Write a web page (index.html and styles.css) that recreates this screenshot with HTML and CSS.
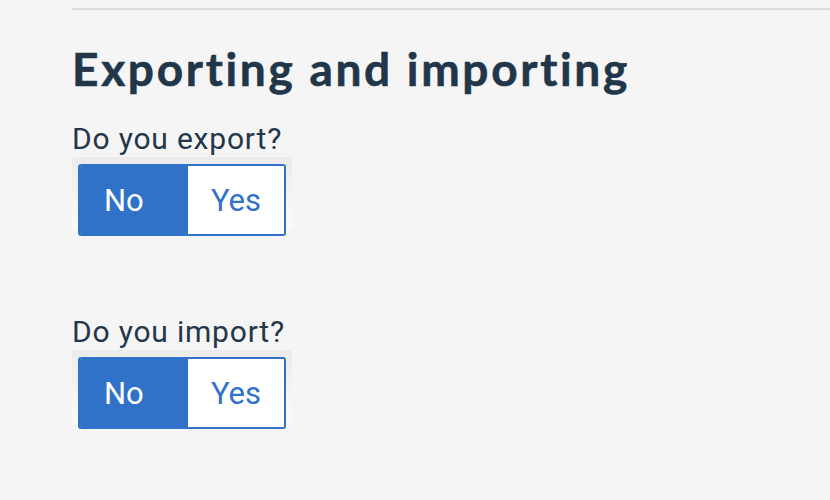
FILE: index.html
```html
<!DOCTYPE html>
<html lang="en">
<head>
<meta charset="utf-8">
<title>Exporting and importing</title>
<link rel="stylesheet" href="styles.css">
</head>
<body>
<main class="page">
  <hr class="rule">
  <h2 class="title">Exporting and importing</h2>
  <div class="question">
    <p class="label">Do you export?</p>
    <div class="toggle-wrap">
      <div class="toggle">
        <button class="opt opt-on">No</button>
        <button class="opt opt-off">Yes</button>
      </div>
    </div>
  </div>
  <div class="question">
    <p class="label">Do you import?</p>
    <div class="toggle-wrap">
      <div class="toggle">
        <button class="opt opt-on">No</button>
        <button class="opt opt-off">Yes</button>
      </div>
    </div>
  </div>
</main>
</body>
</html>
```

FILE: styles.css
```css
html, body {
  margin: 0;
  padding: 0;
  background: #f5f5f5;
  min-height: 100vh;
}
.page {
  padding-left: 72px;
  padding-top: 8px;
  display: flex;
  flex-direction: column;
  align-items: flex-start;
}
.rule {
  align-self: stretch;
  margin: 0;
  border: 0;
  height: 2px;
  background: #dedede;
}
.title {
  margin: 31px 0 0 0;
  font-family: Lato, "DejaVu Sans", sans-serif;
  font-weight: 700;
  font-size: 46px;
  line-height: 56px;
  color: #223649;
  letter-spacing: 2.7px;
  -webkit-text-stroke: 0.6px #223649;
}
.question {
  display: flex;
  flex-direction: column;
  align-items: flex-start;
  margin-top: 25px;
}
.question + .question {
  margin-top: 85px;
}
.label {
  margin: 0;
  font-family: Roboto, "Noto Sans", sans-serif;
  font-size: 30px;
  line-height: 34px;
  letter-spacing: 0.8px;
  color: #24374a;
}
.toggle-wrap {
  margin-top: 1px;
  padding: 7px 6px 0 6px;
  border-radius: 4px;
  background: linear-gradient(#ebebeb, #fbfbfb);
}
.toggle {
  display: flex;
  width: 208px;
  height: 72px;
  margin-bottom: -6px;
  box-sizing: border-box;
  border: 2px solid #3172c9;
  border-radius: 3px;
  overflow: hidden;
  background: #fff;
  position: relative;
}
.opt {
  margin: 0;
  border: 0;
  padding: 0;
  font-family: Roboto, "Noto Sans", sans-serif;
  font-size: 31px;
  cursor: pointer;
}
.opt-on {
  width: 108px;
  padding-left: 24px;
  text-align: left;
  background: #3172c9;
  color: #fff;
}
.opt-off {
  flex: 1;
  background: #fff;
  color: #3172c9;
}
```
